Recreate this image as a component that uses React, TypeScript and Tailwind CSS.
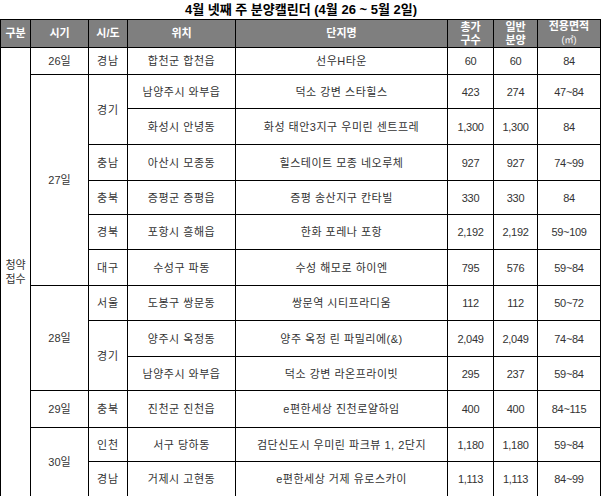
import React from "react";

type Row = {
  day?: { label: string; span: number };
  region?: { label: string; span: number };
  loc: string;
  name: string;
  total: string;
  general: string;
  area: string;
  h: number;
};

const rows: Row[] = [
  { day: { label: "26일", span: 1 }, region: { label: "경남", span: 1 }, loc: "합천군 합천읍", name: "선우H타운", total: "60", general: "60", area: "84", h: 27 },
  { day: { label: "27일", span: 6 }, region: { label: "경기", span: 2 }, loc: "남양주시 와부읍", name: "덕소 강변 스타힐스", total: "423", general: "274", area: "47~84", h: 34 },
  { loc: "화성시 안녕동", name: "화성 태안3지구 우미린 센트프레", total: "1,300", general: "1,300", area: "84", h: 36 },
  { region: { label: "충남", span: 1 }, loc: "아산시 모종동", name: "힐스테이트 모종 네오루체", total: "927", general: "927", area: "74~99", h: 36 },
  { region: { label: "충북", span: 1 }, loc: "증평군 증평읍", name: "증평 송산지구 칸타빌", total: "330", general: "330", area: "84", h: 34 },
  { region: { label: "경북", span: 1 }, loc: "포항시 흥해읍", name: "한화 포레나 포항", total: "2,192", general: "2,192", area: "59~109", h: 35 },
  { region: { label: "대구", span: 1 }, loc: "수성구 파동", name: "수성 해모로 하이엔", total: "795", general: "576", area: "59~84", h: 36 },
  { day: { label: "28일", span: 3 }, region: { label: "서울", span: 1 }, loc: "도봉구 쌍문동", name: "쌍문역 시티프라디움", total: "112", general: "112", area: "50~72", h: 35 },
  { region: { label: "경기", span: 2 }, loc: "양주시 옥정동", name: "양주 옥정 린 파밀리에(&)", total: "2,049", general: "2,049", area: "74~84", h: 36 },
  { loc: "남양주시 와부읍", name: "덕소 강변 라온프라이빗", total: "295", general: "237", area: "59~84", h: 34 },
  { day: { label: "29일", span: 1 }, region: { label: "충북", span: 1 }, loc: "진천군 진천읍", name: "e편한세상 진천로얄하임", total: "400", general: "400", area: "84~115", h: 37 },
  { day: { label: "30일", span: 2 }, region: { label: "인천", span: 1 }, loc: "서구 당하동", name: "검단신도시 우미린 파크뷰 1, 2단지", total: "1,180", general: "1,180", area: "59~84", h: 34 },
  { region: { label: "경남", span: 1 }, loc: "거제시 고현동", name: "e편한세상 거제 유로스카이", total: "1,113", general: "1,113", area: "84~99", h: 35 },
];

const td = "border border-black text-center align-middle p-0";
const num = "border border-black text-center align-middle p-0 text-[11px] tracking-[-0.3px]";

export default function App() {
  return (
    <div
      className="w-[602px] h-[496px] bg-white text-[#333]"
      style={{ fontFamily: '"Liberation Sans", "Noto Sans CJK KR", sans-serif' }}
    >
      <div className="h-[19px] flex items-center justify-center text-[13px] font-bold text-black leading-none">
        4월 넷째 주 분양캘린더 (4월 26 ~ 5월 2일)
      </div>
      <table className="w-[600px] table-fixed border-collapse border border-black text-[11px] leading-[14px]">
        <colgroup>
          <col className="w-[30px]" />
          <col className="w-[58px]" />
          <col className="w-[39px]" />
          <col className="w-[108px]" />
          <col className="w-[212px]" />
          <col className="w-[46px]" />
          <col className="w-[44px]" />
          <col className="w-[63px]" />
        </colgroup>
        <thead>
          <tr className="h-[26px] bg-[#7f7f7f] text-white font-bold text-[11px] leading-[13px]">
            <th className={td}>구분</th>
            <th className={td}>시기</th>
            <th className={td}>시/도</th>
            <th className={td}>위치</th>
            <th className={td}>단지명</th>
            <th className={td}>
              총가
              <br />
              구수
            </th>
            <th className={td}>
              일반
              <br />
              분양
            </th>
            <th className={td}>
              전용면적
              <br />
              <span className="text-[9px] font-normal">(㎡)</span>
            </th>
          </tr>
        </thead>
        <tbody>
          {rows.map((r, i) => (
            <tr key={i} style={{ height: r.h }}>
              {i === 0 && (
                <td className={td} rowSpan={13}>
                  청약
                  <br />
                  접수
                </td>
              )}
              {r.day && (
                <td className={td} rowSpan={r.day.span}>
                  {r.day.label}
                </td>
              )}
              {r.region && (
                <td className={td + " tracking-[1px]"} rowSpan={r.region.span}>
                  {r.region.label}
                </td>
              )}
              <td className={td + " tracking-[0.5px]"}>{r.loc}</td>
              <td className={td + " tracking-[0.5px]"}>{r.name}</td>
              <td className={num}>{r.total}</td>
              <td className={num}>{r.general}</td>
              <td className={num}>{r.area}</td>
            </tr>
          ))}
        </tbody>
      </table>
    </div>
  );
}
